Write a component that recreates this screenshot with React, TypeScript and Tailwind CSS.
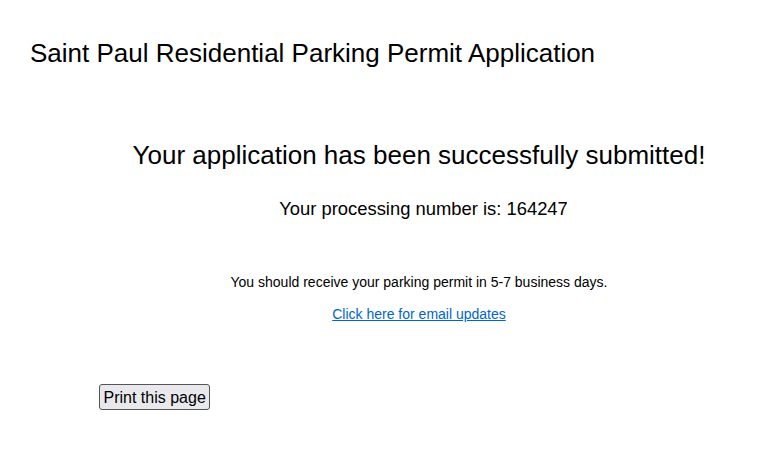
export default function App() {
  return (
    <div className="min-h-[449px] bg-white text-black" style={{ fontFamily: '"Liberation Sans", Arial, sans-serif' }}>
      <h1 className="pl-[30px] pt-[38px] text-[26px] leading-[30px]">Saint Paul Residential Parking Permit Application</h1>
      <div className="ml-[80px] mt-[71px]">
        <div className="flex flex-col items-center text-center">
          <h2 className="text-[26px] leading-[32px]">Your application has been successfully submitted!</h2>
          <p className="mt-[27px] pl-[9px] text-[18.4px] leading-[22px]">Your processing number is: 164247</p>
          <p className="mt-[53px] text-[14px] leading-[18px]">You should receive your parking permit in 5-7 business days.</p>
          <a href="#" className="mt-[14px] text-[14px] leading-[18px] text-[#0066cc] underline">Click here for email updates</a>
        </div>
        <div className="mt-[61px] pl-[19px]">
          <button className="rounded-[3px] border border-[#555] bg-[#e9e9ed] px-[3.5px] py-[1.5px] text-[16px] leading-[21px]">Print this page</button>
        </div>
      </div>
    </div>
  );
}
